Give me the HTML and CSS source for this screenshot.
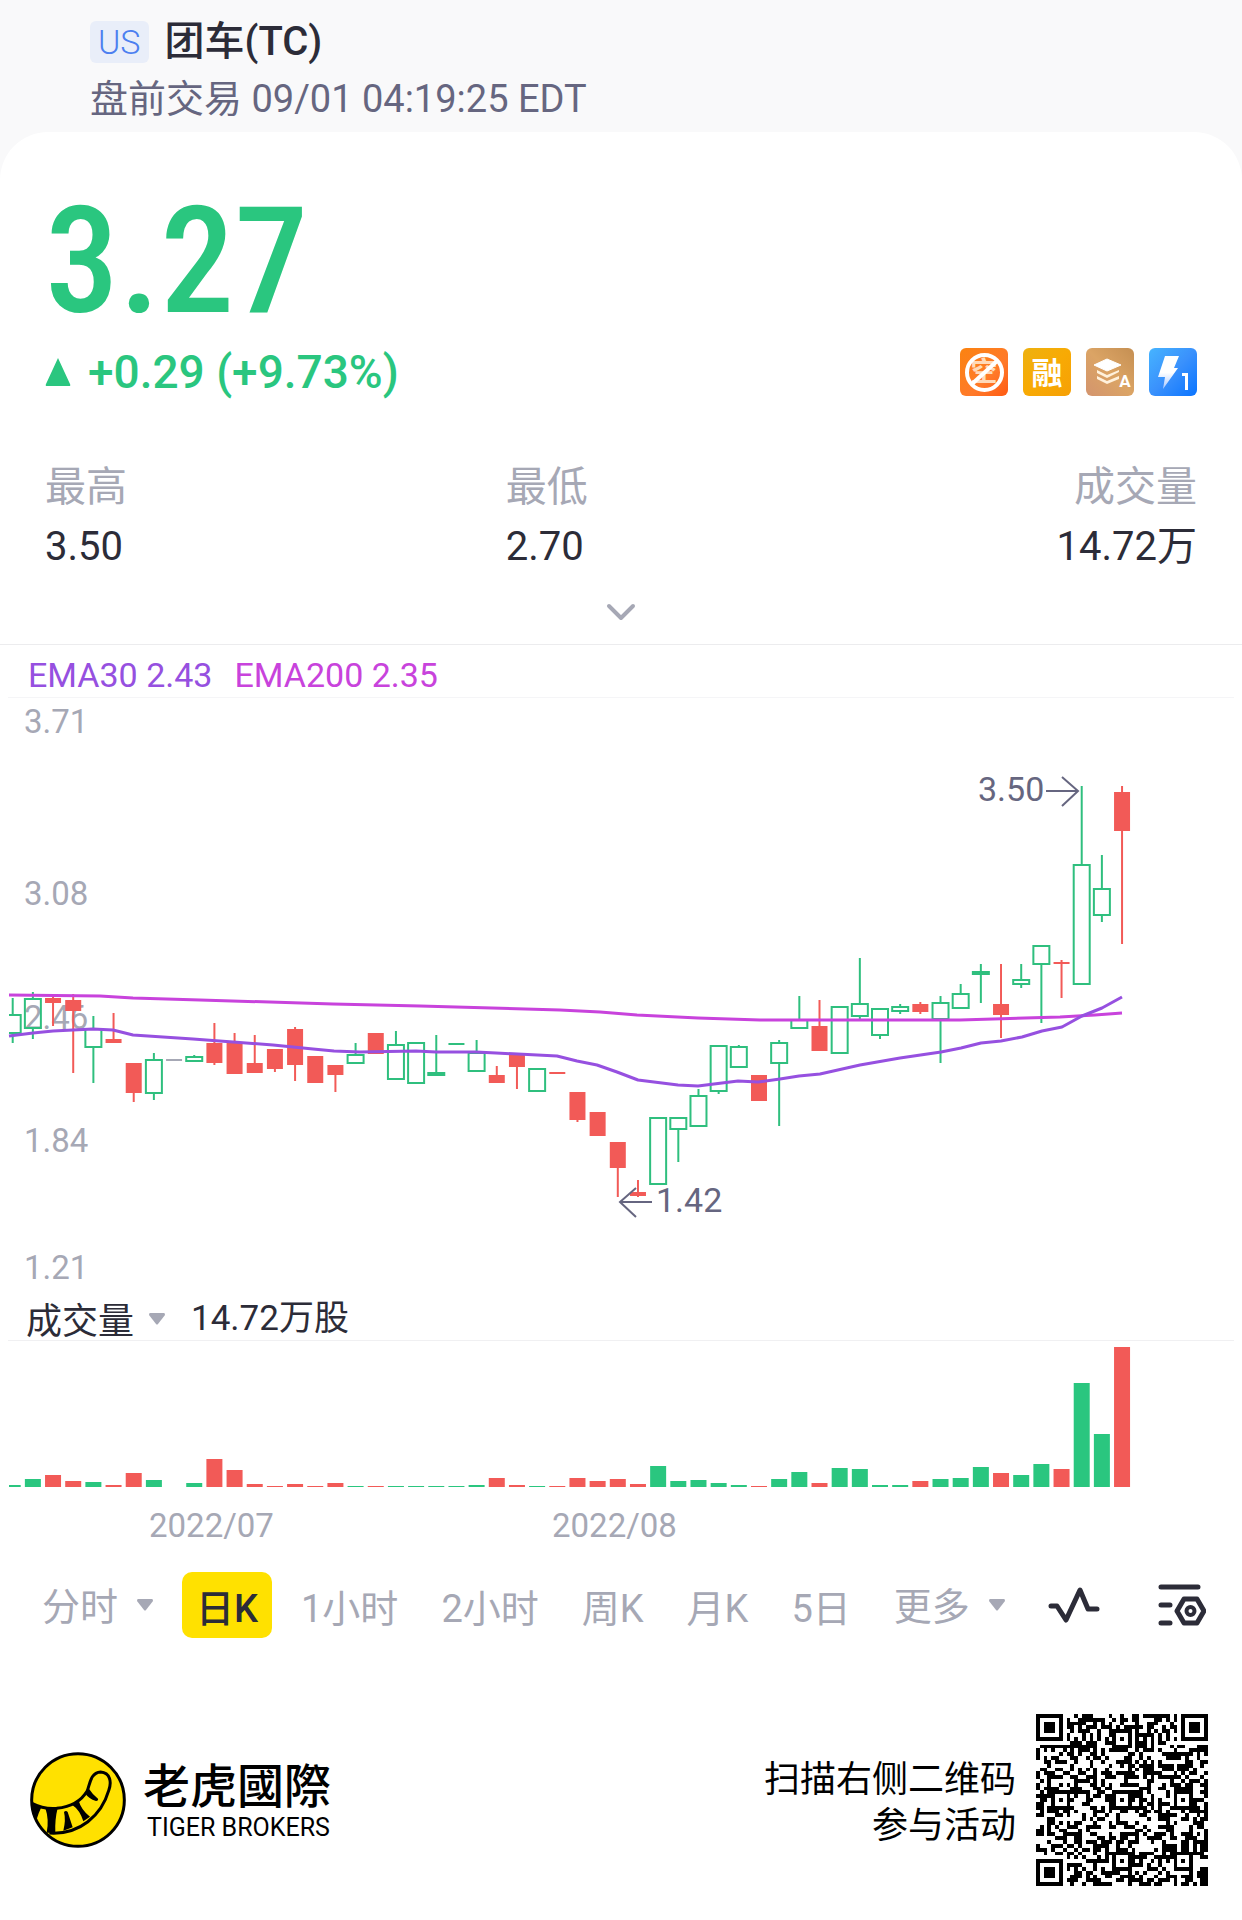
FILE: index.html
```html
<!DOCTYPE html>
<html lang="zh-CN">
<head>
    <meta charset="UTF-8">
    <meta name="viewport" content="width=device-width, initial-scale=1.0">
    <title>团车(TC)</title>
    <link rel="stylesheet" href="styles.css">
</head>
<body>
    <!-- Header -->
    <header class="header">
        <div class="title-row">
            <span class="market">US</span>
            <h1 class="name">团车(TC)</h1>
        </div>
        <p class="session">盘前交易 09/01 04:19:25 EDT</p>
    </header>

    <main class="card">
        <!-- Quote -->
        <section class="quote">
            <p class="price">3.27</p>
            <div class="change-row">
                <p class="change">
                    <svg class="up" viewBox="0 0 26 28"><path d="M13 0L25 26Q26 28 24 28H2Q0 28 1 26Z" fill="#2ac67f"/></svg>
                    +0.29 (+9.73%)
                </p>
                <div class="tags">
                    <svg class="tag" viewBox="0 0 48 48">
                        <defs>
                            <linearGradient id="tagOrange" x1="0" y1="0" x2="1" y2="1"><stop offset="0" stop-color="#fb8310"/><stop offset=".6" stop-color="#ff7a2a"/><stop offset="1" stop-color="#ff5a12"/></linearGradient>
                        </defs>
                        <rect width="48" height="48" rx="6" fill="url(#tagOrange)"/>
                        <text x="24" y="33" class="tag-text tag-short">空</text>
                        <circle cx="24.500" cy="24.500" r="17.500" fill="none" stroke="#fff" stroke-width="4"/>
                        <path d="M12 36L37 13" stroke="#fff" stroke-width="4"/>
                    </svg>
                    <svg class="tag" viewBox="0 0 48 48">
                        <defs>
                            <linearGradient id="tagYellow" x1="0" y1="0" x2="1" y2="1"><stop offset="0" stop-color="#edb110"/><stop offset=".5" stop-color="#f8aa04"/><stop offset="1" stop-color="#f6a005"/></linearGradient>
                        </defs>
                        <rect width="48" height="48" rx="6" fill="url(#tagYellow)"/>
                        <text x="24" y="36" class="tag-text">融</text>
                    </svg>
                    <svg class="tag" viewBox="0 0 48 48">
                        <defs>
                            <linearGradient id="tagBrown" x1="0" y1="1" x2="1" y2="0"><stop offset="0" stop-color="#d3946e"/><stop offset=".5" stop-color="#dba465"/><stop offset="1" stop-color="#c58f52"/></linearGradient>
                        </defs>
                        <rect width="48" height="48" rx="6" fill="url(#tagBrown)"/>
                        <path d="M8 17L21 11L35 17L21 23Z" fill="#fff" stroke="#fff" stroke-linejoin="round"/>
                        <path d="M11 22L21 27L33 22V24L21 30L11 25ZM11 28L21 33L33 28V31L21 36L11 31Z" fill="#fff1dc"/>
                        <text x="39" y="39" class="tag-small">A</text>
                    </svg>
                    <svg class="tag" viewBox="0 0 48 48">
                        <defs>
                            <linearGradient id="tagBlue" x1="0" y1="0" x2="1" y2="1"><stop offset="0" stop-color="#46b4ff"/><stop offset=".5" stop-color="#3a91fc"/><stop offset="1" stop-color="#0a74ff"/></linearGradient>
                            <linearGradient id="bolt" x1="0" y1="0" x2="0" y2="1"><stop offset=".5" stop-color="#fff"/><stop offset="1" stop-color="#a9c8ff"/></linearGradient>
                        </defs>
                        <rect width="48" height="48" rx="6" fill="url(#tagBlue)"/>
                        <path d="M16 8H30L25 20H29L14 41L16 29H9Z" fill="url(#bolt)"/>
                        <path d="M33 25H39V42H36V28H33Z" fill="#fff"/>
                    </svg>
                </div>
            </div>
            <dl class="stats">
                <div class="stat"><dt>最高</dt><dd>3.50</dd></div>
                <div class="stat"><dt>最低</dt><dd>2.70</dd></div>
                <div class="stat stat-right"><dt>成交量</dt><dd>14.72万</dd></div>
            </dl>
            <button class="expand" aria-label="展开">
                <svg viewBox="0 0 30 18"><path d="M3 3L15 15L27 3" fill="none" stroke="#a6a8b5" stroke-width="4" stroke-linecap="round" stroke-linejoin="round"/></svg>
            </button>
        </section>

        <!-- K line chart -->
        <section class="chart">
            <p class="legend"><span class="ema30">EMA30 2.43</span><span class="ema200">EMA200 2.35</span></p>
            <svg id="kline" class="plot" viewBox="0 698 1242 600">
                <g class="axis">
                    <text x="24" y="733">3.71</text>
                    <text x="24" y="905">3.08</text>
                    <text x="24" y="1029">2.46</text>
                    <text x="24" y="1152">1.84</text>
                    <text x="24" y="1279">1.21</text>
                </g>
                <g id="candles"></g>
                <polyline class="line200" points="9,995 100,996 133,998 200,1000 333,1004 420,1006 560,1010 600,1012 637,1015 698,1018 760,1020 960,1020 1060,1017 1095,1015 1122,1013"/>
                <polyline class="line30" points="9,1036 33,1033 53,1031 73,1030 93,1029 113,1030 133,1035 193,1039 233,1042 273,1045 313,1049 334,1051 360,1052 416,1051 436,1052 476,1052 496,1053 557,1056 577,1061 597,1065 617,1072 638,1080 678,1085 698,1086 738,1081 758,1082 780,1079 799,1076 820,1074 860,1065 900,1058 941,1052 961,1048 981,1043 1001,1041 1022,1037 1042,1031 1062,1027 1082,1016 1102,1008 1122,997"/>
                <g class="mark">
                    <text x="978" y="801">3.50</text>
                    <path d="M1046 791H1078M1062 777L1078 791L1062 806"/>
                    <text x="656" y="1212">1.42</text>
                    <path d="M652 1202H620M636 1188L620 1202L636 1217"/>
                </g>
            </svg>
        </section>

        <!-- Volume -->
        <section class="volume">
            <div class="volume-head">
                <div class="dropdown">
                    <select class="indicator" aria-label="指标"><option>成交量</option></select>
                    <svg class="arrow" viewBox="0 0 16 12"><path d="M1 0H15Q16 0 16 2L9 11Q8 12 7 11L0 2Q0 0 1 0Z" fill="#a6a8b5"/></svg>
                </div>
                <span class="volume-value">14.72万股</span>
            </div>
            <svg class="plot" viewBox="0 1341 1242 209">
                <g id="bars"></g>
                <g class="axis">
                    <text x="149" y="1537">2022/07</text>
                    <text x="552" y="1537">2022/08</text>
                </g>
            </svg>
        </section>

        <!-- Period tabs -->
        <nav class="tabs">
            <div class="dropdown tab">
                <select aria-label="分时"><option>分时</option></select>
                <svg class="arrow" viewBox="0 0 16 12"><path d="M1 0H15Q16 0 16 2L9 11Q8 12 7 11L0 2Q0 0 1 0Z" fill="#a6a8b5"/></svg>
            </div>
            <button class="tab active">日K</button>
            <button class="tab">1小时</button>
            <button class="tab">2小时</button>
            <button class="tab">周K</button>
            <button class="tab">月K</button>
            <button class="tab">5日</button>
            <div class="dropdown tab">
                <select aria-label="更多"><option>更多</option></select>
                <svg class="arrow" viewBox="0 0 16 12"><path d="M1 0H15Q16 0 16 2L9 11Q8 12 7 11L0 2Q0 0 1 0Z" fill="#a6a8b5"/></svg>
            </div>
            <button class="tab" aria-label="画线">
                <svg class="icon-wave" viewBox="0 0 52 36"><path d="M3 19H9L18 33L32 3L40 22H49" fill="none" stroke="#2c2c38" stroke-width="5" stroke-linecap="round" stroke-linejoin="round"/></svg>
            </button>
            <button class="tab tab-last" aria-label="设置">
                <svg class="icon-setting" viewBox="0 0 48 42">
                    <g fill="none" stroke="#2c2c38" stroke-width="5" stroke-linecap="round" stroke-linejoin="round">
                        <path d="M3 3H40M3 21H12M3 39H12"/>
                        <path d="M26 15H39L46 27L39 39H26L19 27Z"/>
                        <circle cx="32.500" cy="27" r="4" stroke-width="4"/>
                    </g>
                </svg>
            </button>
        </nav>

        <!-- Footer -->
        <footer class="footer">
            <svg class="logo" viewBox="90 96 288 288">
                <circle cx="234" cy="240" r="139" fill="#ffe100" stroke="#000" stroke-width="9"/>
                <path d="M96 250Q130 268 170 265Q235 258 262 212C270 190 272 158 302 156C330 158 336 185 326 212C305 285 240 345 148 339" fill="none" stroke="#000" stroke-width="9"/>
                <path d="M94 247L124 262Q116 278 110 298L98 282ZM136 264L173 264Q164 300 166 338L140 338Q148 300 136 264ZM192 276Q198 270 203 276L218 322L190 332Q198 300 192 276ZM216 254L236 242Q244 270 270 290L250 304Q240 270 216 254ZM254 218L268 208Q276 222 294 236Q296 242 288 243Q266 236 254 218Z"/>
            </svg>
            <div class="brand">
                <strong class="brand-cn">老虎國際</strong>
                <span class="brand-en">TIGER BROKERS</span>
            </div>
            <p class="invite">扫描右侧二维码<br>参与活动</p>
            <svg id="qr" class="qr" viewBox="0 0 45 45" shape-rendering="crispEdges"></svg>
        </footer>
    </main>
    <script src="script.js"></script>
</body>
</html>
```
FILE: styles.css
```css
* {
    box-sizing: border-box;
}
body {
    margin: 0;
    background-color: #f9f9fa;
    color: #2c2c38;
    font-family: Roboto, "Noto Sans CJK SC", sans-serif;
}
h1, p, dl, dd {
    margin: 0;
}
svg {
    display: block;
}
button, select {
    padding: 0;
    border: none;
    background: none;
    color: inherit;
    font: inherit;
    appearance: none;
    cursor: pointer;
}

/* Header */
.header {
    padding: 19px 90px 9px;
}
.title-row {
    display: flex;
    align-items: center;
    gap: 16px;
    height: 46px;
}
.market {
    padding: 0 8px;
    border-radius: 6px;
    background-color: #e9eef9;
    color: #4c7ff0;
    font-size: 34px;
    font-weight: 300;
    line-height: 42px;
}
.name {
    font-size: 40px;
    font-weight: 500;
    line-height: 46px;
}
.session {
    margin-top: 10px;
    color: #666680;
    font-size: 38px;
    line-height: 48px;
}

/* Quote */
.card {
    padding-top: 70px;
    border-radius: 48px 48px 0 0;
    background-color: #fff;
}
.quote {
    padding: 0 45px 12px;
    border-bottom: 1px solid #ececee;
}
.price {
    color: #2ac67f;
    font-family: "Roboto Condensed", Roboto, sans-serif;
    font-size: 148px;
    font-weight: 500;
    line-height: 120px;
}
.change-row {
    display: flex;
    justify-content: space-between;
    align-items: center;
    margin-top: 26px;
}
.change {
    display: flex;
    align-items: center;
    gap: 17px;
    color: #2ac67f;
    font-size: 46px;
    font-weight: 500;
    line-height: 48px;
}
.up {
    width: 26px;
    height: 28px;
}
.tags {
    display: flex;
    gap: 15px;
}
.tag {
    width: 48px;
    height: 48px;
}
.tag-text {
    fill: #fff;
    font-size: 31px;
    font-weight: 700;
    text-anchor: middle;
}
.tag-short {
    fill: #ffd9b8;
    font-size: 27px;
}
.tag-small {
    fill: #fff;
    font-size: 17px;
    font-weight: 700;
    text-anchor: middle;
}
.stats {
    display: grid;
    grid-template-columns: 2fr 2fr 1fr;
    margin-top: 66px;
    font-size: 40px;
    line-height: 50px;
}
.stat dt {
    color: #a6a8b5;
    font-size: 41px;
}
.stat dd {
    margin-top: 10px;
}
.stat-right {
    text-align: right;
}
.expand {
    display: flex;
    justify-content: center;
    align-items: center;
    width: 60px;
    height: 40px;
    margin: 20px auto 0;
}
.expand svg {
    width: 30px;
    height: 18px;
}

/* Charts */
.legend {
    display: flex;
    gap: 22px;
    margin: 0 8px;
    padding: 8px 20px 0;
    border-bottom: 1px solid #f5f5f7;
    font-size: 34px;
    line-height: 44px;
}
.ema30 {
    color: #9650e0;
}
.ema200 {
    color: #c843dc;
}
.plot {
    width: 100%;
    height: auto;
}
.axis text {
    fill: #a6a8b5;
    font-size: 33px;
}
.mark text {
    fill: #666680;
    font-size: 34px;
}
.mark path {
    fill: none;
    stroke: #666680;
    stroke-width: 2;
}
.line30, .line200 {
    fill: none;
    stroke-width: 3;
    stroke-linejoin: round;
}
.line30 {
    stroke: #9650e0;
}
.line200 {
    stroke: #c843dc;
}
.volume-head {
    display: flex;
    align-items: center;
    gap: 26px;
    margin: 0 8px;
    padding-left: 18px;
    border-bottom: 1px solid #f0f0f2;
    line-height: 42px;
}
.dropdown {
    display: flex;
    align-items: center;
    gap: 14px;
}
.dropdown select {
    padding-top: 3px;
}
.arrow {
    width: 16px;
    height: 12px;
}
.indicator {
    height: 42px;
    font-size: 36px;
}
.volume-value {
    font-size: 35px;
}

/* Tabs */
.tabs {
    display: flex;
    gap: 15px;
    margin-top: 22px;
    padding: 0 22px 0 28px;
    color: #a6a8b5;
    font-size: 38px;
}
.tab {
    display: flex;
    align-items: center;
    height: 66px;
    padding: 0 14px;
    border-radius: 10px;
    white-space: nowrap;
}
.tabs .dropdown {
    gap: 18px;
}
.active {
    background-color: #ffe100;
    color: #2c2c38;
    font-weight: 500;
}
.tab-last {
    margin-left: auto;
}
.icon-wave {
    width: 52px;
    height: 36px;
}
.icon-setting {
    width: 48px;
    height: 42px;
}

/* Footer */
.footer {
    display: flex;
    align-items: center;
    padding: 76px 34px 34px 30px;
    color: #000;
}
.logo {
    width: 96px;
    height: 96px;
}
.brand {
    display: flex;
    flex-direction: column;
    margin-left: 17px;
    padding-top: 6px;
}
.brand-cn {
    font-size: 47px;
    font-weight: 500;
    line-height: 50px;
}
.brand-en {
    padding-left: 4px;
    font-size: 25px;
    line-height: 32px;
}
.invite {
    margin-left: auto;
    padding-top: 5px;
    font-size: 36px;
    line-height: 46px;
    text-align: right;
}
.qr {
    width: 172px;
    height: 172px;
    margin-left: 20px;
}
```
FILE: script.js
```js
const GREEN = "#2fbf7e";
const RED = "#f25a57";
const GREY = "#a6a8b5";
const STEP = 20.17;
const FIRST = 12.7;

// [color, high, body top, body bottom, low, volume]
const days = [
    ["g", 998, 1015, 1033, 1043, 2], ["g", 992, 999, 1028, 1039, 8],
    ["r", 994, 998, 1003, 1026, 12], ["r", 994, 1000, 1011, 1073, 6],
    ["g", 1016, 1029, 1047, 1083, 5], ["r", 1013, 1039, 1043, 1043, 2],
    ["r", 1063, 1063, 1093, 1102, 14], ["g", 1053, 1060, 1093, 1100, 7],
    ["n", 1060, 1059, 1061, 1060, 0], ["g", 1055, 1057, 1061, 1061, 4],
    ["r", 1023, 1043, 1063, 1065, 28], ["r", 1033, 1043, 1074, 1074, 17],
    ["r", 1035, 1063, 1073, 1073, 3], ["r", 1049, 1049, 1069, 1072, 1],
    ["r", 1027, 1029, 1065, 1081, 3], ["r", 1056, 1056, 1083, 1083, 1],
    ["r", 1065, 1065, 1075, 1092, 4], ["g", 1043, 1055, 1063, 1063, 1],
    ["r", 1033, 1033, 1054, 1054, 1], ["g", 1031, 1045, 1079, 1079, 1],
    ["g", 1043, 1043, 1083, 1083, 1], ["g", 1035, 1073, 1075, 1075, 1],
    ["g", 1044, 1044, 1044, 1044, 1], ["g", 1040, 1053, 1071, 1072, 2],
    ["r", 1066, 1075, 1083, 1083, 9], ["r", 1055, 1055, 1067, 1089, 2],
    ["g", 1069, 1069, 1091, 1091, 1], ["r", 1072, 1072, 1074, 1074, 1],
    ["r", 1092, 1092, 1120, 1122, 9], ["r", 1112, 1112, 1136, 1136, 6],
    ["r", 1142, 1142, 1168, 1197, 8], ["r", 1180, 1192, 1196, 1197, 3],
    ["g", 1118, 1118, 1184, 1184, 21], ["g", 1118, 1118, 1129, 1162, 6],
    ["g", 1089, 1096, 1126, 1126, 7], ["g", 1046, 1046, 1091, 1094, 4],
    ["g", 1045, 1047, 1067, 1067, 2], ["r", 1075, 1075, 1101, 1101, 1],
    ["g", 1040, 1043, 1063, 1126, 8], ["g", 996, 1020, 1028, 1028, 15],
    ["r", 1000, 1026, 1051, 1051, 4], ["g", 1007, 1007, 1053, 1053, 19],
    ["g", 958, 1004, 1016, 1019, 18], ["g", 1009, 1009, 1035, 1039, 2],
    ["g", 1004, 1007, 1011, 1014, 2], ["r", 1002, 1004, 1012, 1014, 6],
    ["g", 996, 1003, 1019, 1063, 8], ["g", 984, 994, 1008, 1008, 9],
    ["g", 964, 972, 974, 1003, 20], ["r", 964, 1004, 1015, 1038, 14],
    ["g", 964, 980, 984, 988, 12], ["g", 946, 946, 964, 1023, 23],
    ["r", 960, 962, 964, 998, 18], ["g", 786, 865, 984, 984, 104],
    ["g", 855, 889, 915, 922, 53], ["r", 786, 792, 831, 944, 140]
];

function addShape(parent, tag, attrs) {
    const el = document.createElementNS("http://www.w3.org/2000/svg", tag);
    for (const key in attrs) {
        el.setAttribute(key, attrs[key]);
    }
    parent.appendChild(el);
}

function drawCharts() {
    const candles = document.getElementById("candles");
    const bars = document.getElementById("bars");
    const colors = { g: GREEN, r: RED, n: GREY };

    days.forEach(([type, high, top, bottom, low, volume], i) => {
        const x = FIRST + STEP * i;
        const color = colors[type];
        const left = Math.max(x - 8, 9);

        // wicks stop at the body so hollow candles stay empty
        if (high < top) addShape(candles, "path", { d: `M${x} ${high}V${top}`, stroke: color, "stroke-width": 2 });
        if (low > bottom) addShape(candles, "path", { d: `M${x} ${bottom}V${low}`, stroke: color, "stroke-width": 2 });

        if (i === 0) {
            addShape(candles, "path", { d: `M9 ${top}H${x + 8}V${bottom}H9`, fill: "none", stroke: color, "stroke-width": 2 });
        } else if (type === "g" && top === bottom) {
            addShape(candles, "path", { d: `M${left} ${top}H${x + 8}`, stroke: color, "stroke-width": 2 });
        } else if (type === "g") {
            addShape(candles, "rect", { x: left, y: top, width: 16, height: bottom - top, fill: "none", stroke: color, "stroke-width": 2 });
        } else {
            addShape(candles, "rect", { x: left, y: top, width: 16, height: bottom - top, fill: color });
        }

        addShape(bars, "rect", { x: left, y: 1487 - volume, width: x + 8 - left, height: volume, fill: type === "g" ? "#2ac67f" : color });
    });
}

function drawQr() {
    const size = 45;
    const grid = [];
    let seed = 20220901;

    for (let y = 0; y < size; y++) {
        grid.push([]);
        for (let x = 0; x < size; x++) {
            seed = (seed * 16807) % 2147483647;
            grid[y].push((seed >> 12) & 1);
        }
    }
    // timing
    for (let i = 0; i < size; i++) {
        grid[6][i] = grid[i][6] = (i + 1) % 2;
    }
    // square rings round a centre; dark where ring is in the list
    const mark = (cx, cy, radius, dark) => {
        for (let y = cy - radius; y <= cy + radius; y++) {
            for (let x = cx - radius; x <= cx + radius; x++) {
                if (x < 0 || y < 0 || x >= size || y >= size) continue;
                const ring = Math.max(Math.abs(x - cx), Math.abs(y - cy));
                grid[y][x] = dark.includes(ring) ? 1 : 0;
            }
        }
    };
    [[22, 6], [6, 22], [22, 22], [38, 22], [22, 38], [38, 38]].forEach(([x, y]) => mark(x, y, 2, [0, 2]));
    [[3, 3], [41, 3], [3, 41]].forEach(([x, y]) => mark(x, y, 4, [0, 1, 3]));

    let d = "";
    grid.forEach((row, y) => row.forEach((on, x) => {
        if (on) d += `M${x} ${y}h1v1h-1z`;
    }));
    addShape(document.getElementById("qr"), "path", { d: d });
}

drawCharts();
drawQr();
```
